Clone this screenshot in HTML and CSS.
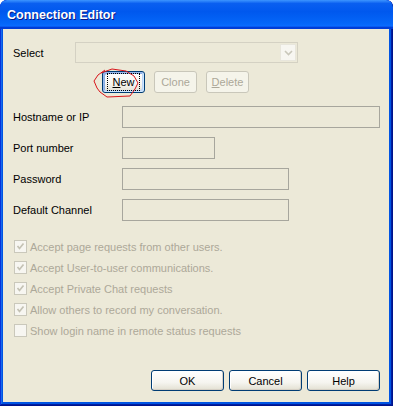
FILE: index.html
```html
<!DOCTYPE html>
<html lang="en">
  <head>
    <meta charset="UTF-8" />
    <meta name="viewport" content="width=device-width, initial-scale=1.0" />
    <title>Connection Editor</title>
    <link rel="stylesheet" href="styles.css">
  </head>
  <body>
    <div class="window">
      <div class="title-bar"><span class="title">Connection Editor</span></div>
      <div class="client">
        <div class="select-row">
          <span class="select-label">Select</span>
          <div class="combo">
            <span class="combo-arrow">
              <svg width="9" height="6" viewBox="0 0 9 6"><path d="M1 1 L4.5 4.5 L8 1" fill="none" stroke="#c9c7ba" stroke-width="1.6" /></svg>
            </span>
          </div>
        </div>

        <div class="edit-buttons">
          <button class="btn btn-focus"><span class="focus-rect"><u>N</u>ew</span></button>
          <button class="btn" disabled>Clone</button>
          <button class="btn" disabled><u>D</u>elete</button>
          <!-- someone's red pen mark round the New button -->
          <svg class="scribble" width="48" height="32" viewBox="0 0 48 32">
            <path d="M12 2 L5 7 L1 13 L4 20 L7 24 L14 29 L37 28 L42 21 L45 15 L41 8 L33 3 L19 1 L8 5"
              fill="none" stroke="#d8161b" stroke-width="1" stroke-linejoin="round" />
          </svg>
        </div>

        <div class="field-row first">
          <span class="field-label">Hostname or IP</span>
          <span class="field field-wide"></span>
        </div>
        <div class="field-row">
          <span class="field-label">Port number</span>
          <span class="field field-short"></span>
        </div>
        <div class="field-row">
          <span class="field-label">Password</span>
          <span class="field field-mid"></span>
        </div>
        <div class="field-row">
          <span class="field-label">Default Channel</span>
          <span class="field field-mid"></span>
        </div>

        <div class="check-list">
          <div class="check-row"><span class="check-box checked"></span>Accept page requests from other users.</div>
          <div class="check-row"><span class="check-box checked"></span>Accept User-to-user communications.</div>
          <div class="check-row"><span class="check-box checked"></span>Accept Private Chat requests</div>
          <div class="check-row"><span class="check-box checked"></span>Allow others to record my conversation.</div>
          <div class="check-row"><span class="check-box"></span>Show login name in remote status requests</div>
        </div>

        <div class="dialog-buttons">
          <button class="btn dlg-btn">OK</button>
          <button class="btn dlg-btn">Cancel</button>
          <button class="btn dlg-btn">Help</button>
        </div>
      </div>
    </div>
  </body>
</html>
```

FILE: styles.css
```css
body {
  margin: 0;
  font-family: "Liberation Sans", Arial, sans-serif;
  font-size: 11px;
  color: #000;
}
.window {
  width: 393px;
  height: 406px;
  display: flex;
  flex-direction: column;
  background: #0054e3;
  border-radius: 7px 7px 0 0;
  overflow: hidden;
  box-shadow: inset -1px -1px #00138c, inset 1px 1px #0831d9,
    inset -2px -2px #001ea0, inset 2px 2px #166aee;
}
.title-bar {
  flex: none;
  height: 29px;
  box-sizing: border-box;
  padding-left: 7px;
  display: flex;
  align-items: center;
  background: linear-gradient(
    to bottom,
    #3d95ff 0%,
    #0a5ff0 12%,
    #0058ee 40%,
    #0466f8 80%,
    #0a6cff 90%,
    #003dd7 94%,
    #003dd7 100%
  );
  border-radius: 7px 7px 0 0;
}
.title {
  color: #fff;
  font-weight: bold;
  font-size: 12.5px;
  text-shadow: 1px 1px #0a1883;
}
.client {
  flex: 1;
  margin: 0 4px 4px 3px;
  padding: 13px 9px 11px 10px;
  background: #ece9d8;
  display: flex;
  flex-direction: column;
}
.select-row {
  display: flex;
  align-items: center;
  height: 21px;
}
.select-label {
  width: 62px;
}
.combo {
  width: 223px;
  height: 21px;
  box-sizing: border-box;
  border: 1px solid #d4d1c3;
  padding: 1px;
  display: flex;
  justify-content: flex-end;
}
.combo-arrow {
  width: 16px;
  box-sizing: border-box;
  border: 1px solid #e8e6dc;
  background: #f7f6f1;
  display: flex;
  align-items: center;
  justify-content: center;
}
.edit-buttons {
  position: relative;
  display: flex;
  gap: 9px;
  height: 22px;
  margin-top: 8px;
  padding-left: 89px;
}
.btn {
  width: 43px;
  height: 22px;
  padding: 0;
  font: inherit;
  color: #000;
  border: 1px solid #003c74;
  border-radius: 3px;
  background: linear-gradient(to bottom, #fff 0%, #f6f5f0 60%, #e3e0d2 100%);
  box-shadow: inset -1px -1px #d6d0c5, inset 1px 1px #fff;
}
.btn:disabled {
  color: #aca899;
  border-color: #c9c7ba;
  background: #f5f4ea;
  box-shadow: none;
}
.btn-focus {
  box-shadow: inset -1px -1px #cee7ff, inset 1px 1px #98b8ea,
    inset -2px -2px #bcd4f6, inset 2px 2px #89ade4;
}
.focus-rect {
  display: inline-block;
  padding: 2px 4px;
  border: 1px dotted #000;
}
.scribble {
  position: absolute;
  left: 80px;
  top: -3px;
}
.field-row {
  display: flex;
  align-items: center;
  height: 22px;
  margin-top: 9px;
}
.field-row.first {
  margin-top: 13px;
}
.field-label {
  width: 109px;
}
.field {
  height: 22px;
  box-sizing: border-box;
  border: 1px solid #a7a69d;
  background: #ece9d8;
}
.field-wide {
  width: 258px;
}
.field-short {
  width: 93px;
}
.field-mid {
  width: 167px;
}
.check-list {
  margin-top: 15px;
  color: #aca899;
}
.check-row {
  display: flex;
  align-items: center;
  height: 21px;
}
.check-box {
  width: 13px;
  height: 13px;
  box-sizing: border-box;
  margin: 0 3px 0 1px;
  border: 1px solid #cac8bb;
  background: #f7f6f1 no-repeat center;
}
.check-box.checked {
  background-image: url("data:image/svg+xml,%3Csvg xmlns='http://www.w3.org/2000/svg' width='11' height='11'%3E%3Cpath d='M2.5 5 L4.5 7.5 L8.5 2.5' fill='none' stroke='%23c4c2b4' stroke-width='1.7'/%3E%3C/svg%3E");
}
.dialog-buttons {
  margin-top: auto;
  display: flex;
  justify-content: flex-end;
  gap: 5px;
}
.dlg-btn {
  width: 73px;
  height: 21px;
}
```
